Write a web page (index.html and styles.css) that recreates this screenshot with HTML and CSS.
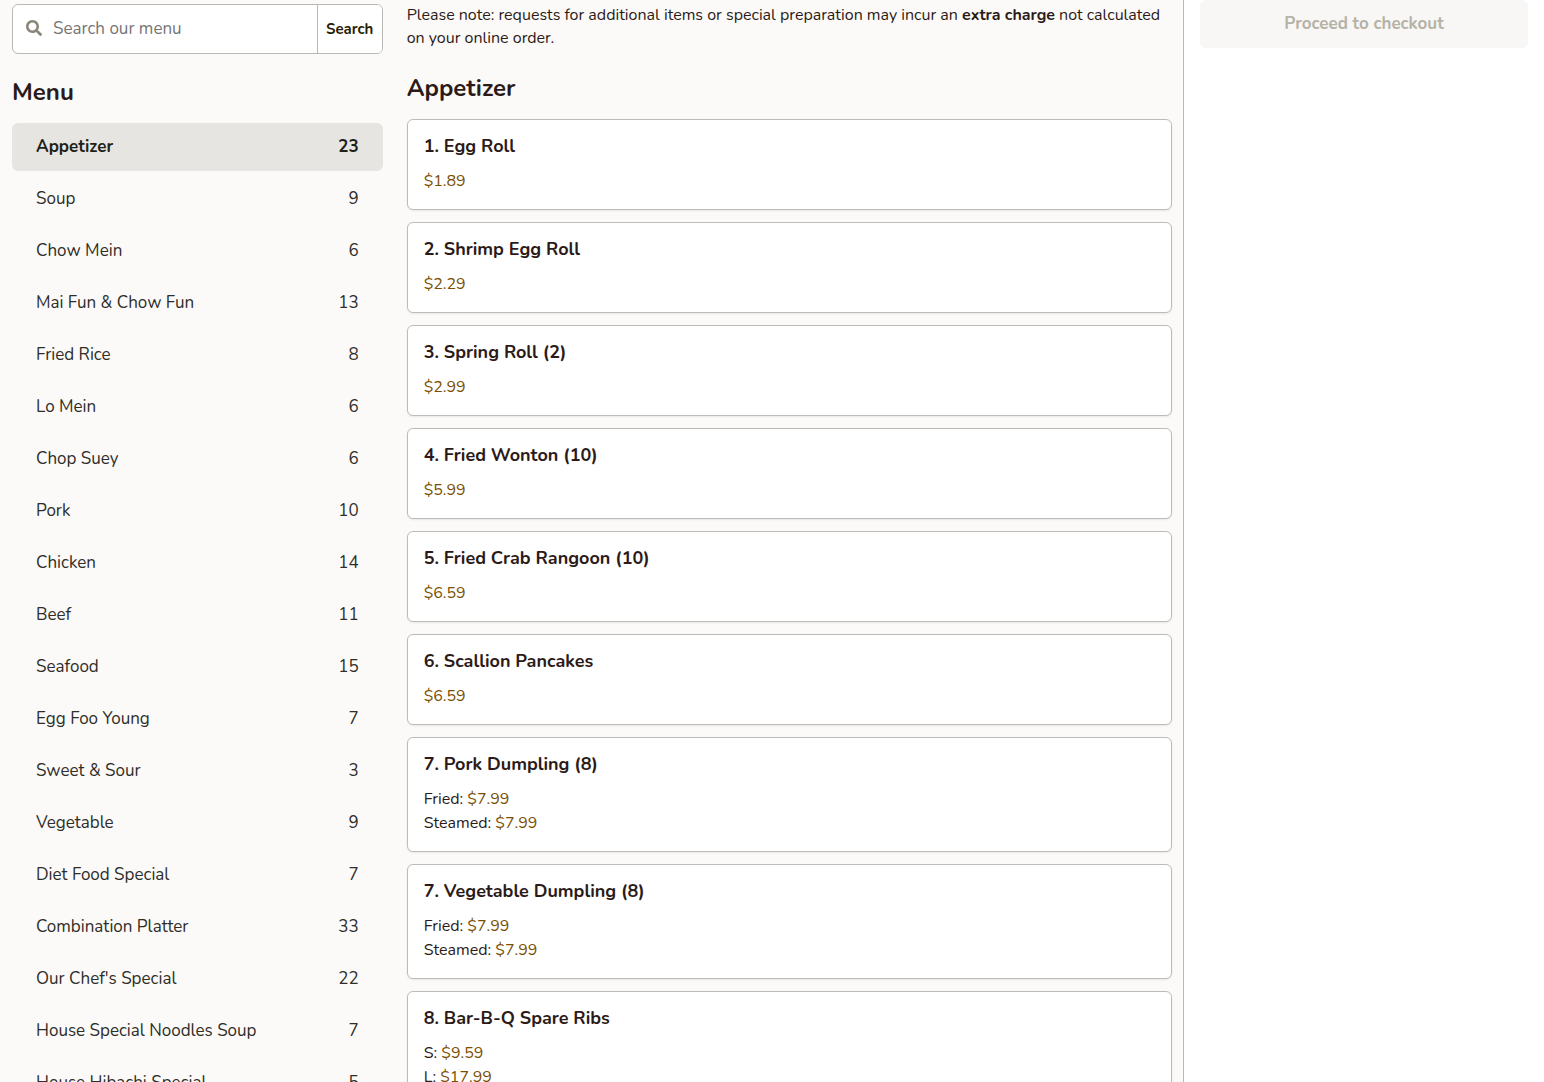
FILE: index.html
```html
<!DOCTYPE html>
<html lang="en">
<head>
  <meta charset="UTF-8">
  <meta name="viewport" content="width=device-width, initial-scale=1.0">
  <title>Order Online</title>
  <link rel="stylesheet" href="styles.css">
</head>
<body>
  <div class="page">
    <aside class="sidebar">
      <form class="search" role="search">
        <label class="search-field" for="menuSearch" aria-label="Search our menu">
          <svg class="search-icon" viewBox="0 0 512 512" aria-hidden="true">
            <path d="M505 442.700L405.300 343c-4.500-4.500-10.600-7-17-7H372c27.600-35.300 44-79.700 44-128C416 93.100 322.900 0 208 0S0 93.100 0 208s93.100 208 208 208c48.300 0 92.700-16.400 128-44v16.300c0 6.400 2.500 12.500 7 17l99.700 99.700c9.400 9.400 24.600 9.400 33.900 0l28.300-28.300c9.400-9.400 9.400-24.600.1-34zM208 336c-70.700 0-128-57.200-128-128 0-70.700 57.200-128 128-128 70.700 0 128 57.200 128 128 0 70.700-57.200 128-128 128z"/>
          </svg>
          <input type="search" id="menuSearch" placeholder="Search our menu">
        </label>
        <button type="button" class="search-button">Search</button>
      </form>

      <h2>Menu</h2>
      <nav class="menu-nav">
        <a href="#appetizer" class="active"><span>Appetizer</span><span>23</span></a>
        <a href="#soup"><span>Soup</span><span>9</span></a>
        <a href="#chow-mein"><span>Chow Mein</span><span>6</span></a>
        <a href="#mai-fun"><span>Mai Fun &amp; Chow Fun</span><span>13</span></a>
        <a href="#fried-rice"><span>Fried Rice</span><span>8</span></a>
        <a href="#lo-mein"><span>Lo Mein</span><span>6</span></a>
        <a href="#chop-suey"><span>Chop Suey</span><span>6</span></a>
        <a href="#pork"><span>Pork</span><span>10</span></a>
        <a href="#chicken"><span>Chicken</span><span>14</span></a>
        <a href="#beef"><span>Beef</span><span>11</span></a>
        <a href="#seafood"><span>Seafood</span><span>15</span></a>
        <a href="#egg-foo-young"><span>Egg Foo Young</span><span>7</span></a>
        <a href="#sweet-sour"><span>Sweet &amp; Sour</span><span>3</span></a>
        <a href="#vegetable"><span>Vegetable</span><span>9</span></a>
        <a href="#diet"><span>Diet Food Special</span><span>7</span></a>
        <a href="#combination"><span>Combination Platter</span><span>33</span></a>
        <a href="#chefs-special"><span>Our Chef's Special</span><span>22</span></a>
        <a href="#noodles-soup"><span>House Special Noodles Soup</span><span>7</span></a>
        <a href="#hibachi"><span>House Hibachi Special</span><span>5</span></a>
      </nav>
    </aside>

    <main class="content">
      <p class="note">Please note: requests for additional items or special preparation may incur an <strong>extra charge</strong> not calculated on your online order.</p>

      <h2 id="appetizer">Appetizer</h2>
      <ul class="items">
        <li class="item">
          <h3>1. Egg Roll</h3>
          <p><span class="price">$1.89</span></p>
        </li>
        <li class="item">
          <h3>2. Shrimp Egg Roll</h3>
          <p><span class="price">$2.29</span></p>
        </li>
        <li class="item">
          <h3>3. Spring Roll (2)</h3>
          <p><span class="price">$2.99</span></p>
        </li>
        <li class="item">
          <h3>4. Fried Wonton (10)</h3>
          <p><span class="price">$5.99</span></p>
        </li>
        <li class="item">
          <h3>5. Fried Crab Rangoon (10)</h3>
          <p><span class="price">$6.59</span></p>
        </li>
        <li class="item">
          <h3>6. Scallion Pancakes</h3>
          <p><span class="price">$6.59</span></p>
        </li>
        <li class="item">
          <h3>7. Pork Dumpling (8)</h3>
          <p>Fried: <span class="price">$7.99</span></p>
          <p>Steamed: <span class="price">$7.99</span></p>
        </li>
        <li class="item">
          <h3>7. Vegetable Dumpling (8)</h3>
          <p>Fried: <span class="price">$7.99</span></p>
          <p>Steamed: <span class="price">$7.99</span></p>
        </li>
        <li class="item">
          <h3>8. Bar-B-Q Spare Ribs</h3>
          <p>S: <span class="price">$9.59</span></p>
          <p>L: <span class="price">$17.99</span></p>
        </li>
      </ul>
    </main>

    <aside class="cart">
      <button type="button" class="checkout" disabled>Proceed to checkout</button>
    </aside>
  </div>
</body>
</html>
```
FILE: styles.css
```css
* {
  box-sizing: border-box;
}
body {
  margin: 0;
  font-family: Nunito, Lato, sans-serif;
  font-size: 16px;
  line-height: 24px;
  color: #2b1a17;
  background-color: #fbfaf8;
}
h2, h3, p, ul {
  margin: 0;
  padding: 0;
}
h2 {
  font-size: 24px;
  line-height: 32px;
}
input, button {
  font-family: inherit;
}
.page {
  display: grid;
  grid-template-columns: 1fr 2fr 360px;
  min-height: 100vh;
}
.sidebar {
  padding: 4px 12px;
}
.search {
  display: flex;
  height: 50px;
  margin-bottom: 22px;
  border: 1px solid #b9b8b4;
  border-radius: 6px;
  background-color: #fff;
  overflow: hidden;
}
.search-field {
  display: flex;
  flex: 1;
  align-items: center;
  gap: 11px;
  padding: 0 0 2px 13px;
}
.search-icon {
  width: 16px;
  height: 16px;
  fill: #8a8578;
}
.search input {
  flex: 1;
  min-width: 0;
  height: 100%;
  padding: 0;
  border: 0;
  outline: 0;
  font-size: 17px;
  background: none;
}
.search input::placeholder {
  color: #757575;
}
.search-button {
  width: 65px;
  padding: 0;
  border: 0;
  border-left: 1px solid #b9b8b4;
  background-color: #fff;
  color: #2b1d03;
  font-size: 15px;
  font-weight: bold;
}
.menu-nav {
  display: flex;
  flex-direction: column;
  gap: 4px;
  margin-top: 15px;
}
.menu-nav a {
  display: flex;
  justify-content: space-between;
  padding: 12px 24px;
  border-radius: 6px;
  color: #2e2d28;
  font-size: 17px;
  text-decoration: none;
}
.menu-nav .active {
  background-color: #e6e5e1;
  font-weight: bold;
  color: #211f1a;
}
.content {
  padding: 4px 12px;
}
.note {
  margin-bottom: 22px;
  line-height: 23px;
}
.items {
  display: flex;
  flex-direction: column;
  gap: 12px;
  margin-top: 15px;
  list-style: none;
}
.item {
  padding: 15px 16px 16px;
  border: 1px solid #bdbcb9;
  border-radius: 6px;
  background-color: #fff;
  box-shadow: 0 1px 2px rgba(0, 0, 0, 0.08);
}
.item h3 {
  margin-bottom: 12px;
  font-size: 18px;
  line-height: 22px;
}
.price {
  color: #7a4f01;
}
.cart {
  padding: 0 16px;
  background-color: #fff;
  box-shadow: -1px 0 0 #b9b8b4;
}
.checkout {
  width: 100%;
  height: 48px;
  padding: 0 0 2px;
  border: 0;
  border-radius: 6px;
  background-color: #f8f7f5;
  color: #b5b2a6;
  font-size: 17px;
  font-weight: bold;
}
```
